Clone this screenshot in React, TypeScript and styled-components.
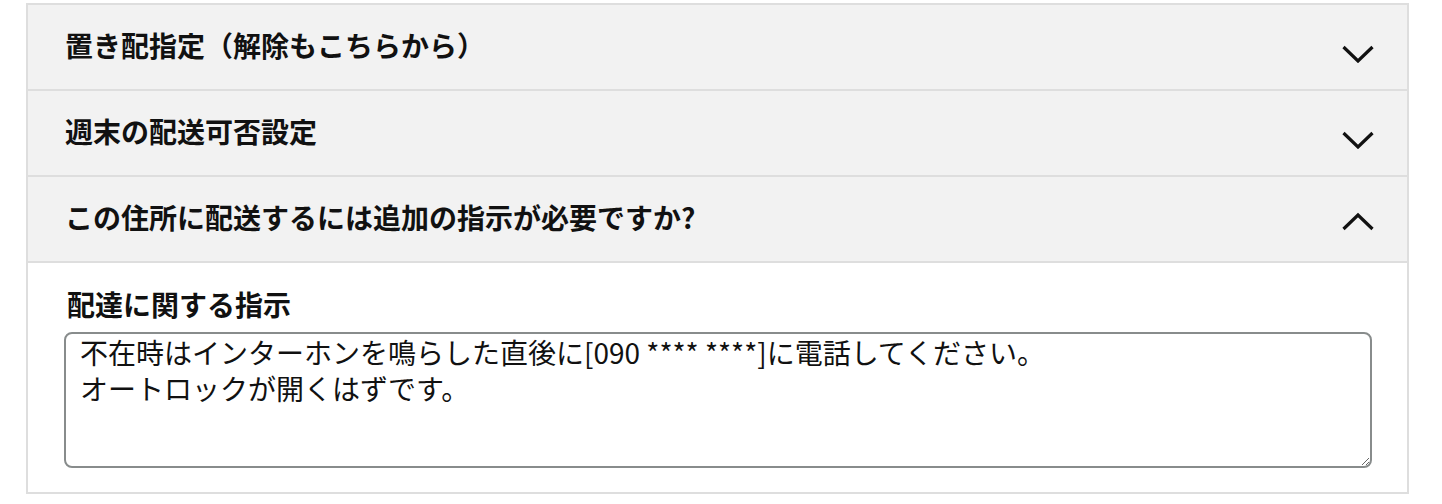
import React, { useState } from 'react';
import styled, { createGlobalStyle } from 'styled-components';

const GlobalStyle = createGlobalStyle`
  body {
    margin: 0;
    background: #fff;
    font-family: "Noto Sans CJK JP", "Noto Sans", sans-serif;
    color: #111;
  }
`;

type Section = { id: string; title: string };

const sections: Section[] = [
  { id: 'place', title: '置き配指定（解除もこちらから）' },
  { id: 'weekend', title: '週末の配送可否設定' },
  { id: 'extra', title: 'この住所に配送するには追加の指示が必要ですか?' },
];

const Chevron: React.FC<{ open: boolean }> = ({ open }) => (
  <ChevronIcon viewBox="0 0 32 32" aria-hidden>
    <polyline
      points={open ? '1.5,26 16,12 30.5,26' : '1.5,16 16,30 30.5,16'}
      fill="none"
      stroke="#111"
      strokeWidth={3.2}
    />
  </ChevronIcon>
);

const App: React.FC = () => {
  const [openId, setOpenId] = useState<string>('extra');
  const [note, setNote] = useState(
    '不在時はインターホンを鳴らした直後に[090 **** ****]に電話してください。\nオートロックが開くはずです。'
  );

  return (
    <>
      <GlobalStyle />
      <Accordion>
        {sections.map((section) => {
          const open = openId === section.id;
          return (
            <div key={section.id}>
              <Header onClick={(): void => setOpenId(open ? '' : section.id)}>
                <Title>{section.title}</Title>
                <Chevron open={open} />
              </Header>
              {open && (
                <Body>
                  <Label htmlFor="delivery-note">配達に関する指示</Label>
                  <NoteArea
                    id="delivery-note"
                    value={note}
                    onChange={(e): void => setNote(e.target.value)}
                  />
                </Body>
              )}
            </div>
          );
        })}
      </Accordion>
    </>
  );
};

export default App;

const Accordion = styled.div`
  box-sizing: border-box;
  width: 1383px;
  margin: 3px 0 0 26px;
  border: 2px solid #dedede;
  background: #fff;
`;

const Header = styled.button`
  display: flex;
  align-items: center;
  justify-content: space-between;
  width: 100%;
  height: 86px;
  padding: 0 33px 0 37px;
  box-sizing: border-box;
  border: none;
  border-bottom: 2px solid #dedede;
  background: #f2f2f2;
  font: inherit;
  color: inherit;
  text-align: left;
  cursor: pointer;
`;

const Title = styled.span`
  font-size: 28px;
  font-weight: 700;
  line-height: 1.4;
  margin-top: -3px;
`;

const ChevronIcon = styled.svg`
  width: 32px;
  height: 32px;
  flex-shrink: 0;
`;

const Body = styled.div`
  display: flex;
  flex-direction: column;
  gap: 8px;
  padding: 22px 35px 24px 36px;
`;

const Label = styled.label`
  font-size: 28px;
  font-weight: 700;
  line-height: 39px;
  padding-left: 3px;
`;

const NoteArea = styled.textarea`
  box-sizing: border-box;
  width: 100%;
  height: 136px;
  padding: 0 14px;
  border: 2px solid #888c8c;
  border-radius: 8px;
  font-family: "Noto Sans CJK JP", "Noto Sans", sans-serif;
  font-size: 28px;
  line-height: 1.3;
  color: #111;
  resize: vertical;
  outline: none;
`;
